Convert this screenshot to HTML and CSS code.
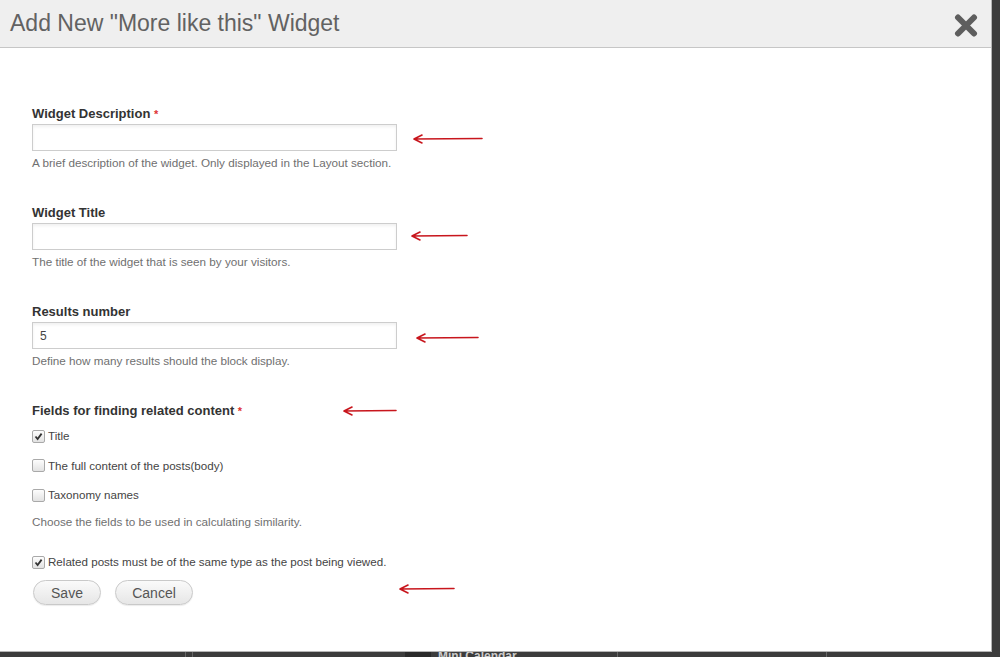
FILE: index.html
```html
<!DOCTYPE html>
<html>
<head>
<meta charset="utf-8">
<link rel="stylesheet" href="styles.css">
</head>
<body>
<div class="modal">
  <div class="modal-header">
    <h1 class="modal-title">Add New "More like this" Widget</h1>
    <button class="close" aria-label="Close">
      <svg width="24" height="23" viewBox="0 0 24 23"><path d="M4 3.5 L20 19.5 M20 3.5 L4 19.5" stroke="#5e5e5e" stroke-width="6" stroke-linecap="round"/></svg>
    </button>
  </div>
  <form class="form">
    <div class="group">
      <label class="label">Widget Description <span class="req">*</span></label>
      <div class="row">
        <input class="text" type="text">
        <svg class="arrow a1" width="72" height="27" viewBox="0 0 72 27"><path d="M2 15 L70 14.5 M2 15 L10 11 M2 15 L10 19" stroke="#c8161d" stroke-width="1.6" fill="none" stroke-linecap="round"/></svg>
      </div>
      <div class="desc">A brief description of the widget. Only displayed in the Layout section.</div>
    </div>
    <div class="group">
      <label class="label">Widget Title</label>
      <div class="row">
        <input class="text" type="text">
        <svg class="arrow a2" width="59" height="27" viewBox="0 0 59 27"><path d="M2 13 L57 12.5 M2 13 L10 9 M2 13 L10 17" stroke="#c8161d" stroke-width="1.6" fill="none" stroke-linecap="round"/></svg>
      </div>
      <div class="desc">The title of the widget that is seen by your visitors.</div>
    </div>
    <div class="group">
      <label class="label">Results number</label>
      <div class="row">
        <input class="text" type="text" value="5">
        <svg class="arrow a3" width="65" height="27" viewBox="0 0 65 27"><path d="M2 16 L63 15.5 M2 16 L10 12 M2 16 L10 20" stroke="#c8161d" stroke-width="1.6" fill="none" stroke-linecap="round"/></svg>
      </div>
      <div class="desc">Define how many results should the block display.</div>
    </div>
    <div class="group last">
      <div class="row">
        <label class="label label-wide">Fields for finding related content <span class="req">*</span></label>
        <svg class="arrow a4" width="56" height="16" viewBox="0 0 56 16"><path d="M2 8 L54 7.5 M2 8 L10 4 M2 8 L10 12" stroke="#c8161d" stroke-width="1.6" fill="none" stroke-linecap="round"/></svg>
      </div>
      <div class="checks">
        <div class="check"><span class="cb on"><svg width="11" height="11" viewBox="0 0 11 11"><path d="M2.5 5.5 L4.6 8 L8.6 2.6" stroke="#333" stroke-width="1.8" fill="none"/></svg></span>Title</div>
        <div class="check"><span class="cb"></span>The full content of the posts(body)</div>
        <div class="check"><span class="cb"></span>Taxonomy names</div>
      </div>
      <div class="desc">Choose the fields to be used in calculating similarity.</div>
    </div>
    <div class="check single"><span class="cb on"><svg width="11" height="11" viewBox="0 0 11 11"><path d="M2.5 5.5 L4.6 8 L8.6 2.6" stroke="#333" stroke-width="1.8" fill="none"/></svg></span>Related posts must be of the same type as the post being viewed.</div>
    <div class="row actions">
      <div class="buttons">
        <button type="button" class="btn save">Save</button>
        <button type="button" class="btn cancel">Cancel</button>
      </div>
      <svg class="arrow a5" width="58" height="25" viewBox="0 0 58 25"><path d="M2 7 L56 6.5 M2 7 L10 3 M2 7 L10 11" stroke="#c8161d" stroke-width="1.6" fill="none" stroke-linecap="round"/></svg>
    </div>
  </form>
</div>
<div class="under">
  <span class="u-col u1"></span>
  <span class="u-col u2"></span>
  <span class="u-icon"></span>
  <span class="u-text">Mini Calendar</span>
  <span class="u-col u3"></span>
  <span class="u-col u4"></span>
</div>
</body>
</html>
```

FILE: styles.css
```css
html, body {
  margin: 0;
  padding: 0;
}
body {
  background: #3c3c3c;
  font-family: "Liberation Sans", Arial, sans-serif;
  width: 1000px;
  height: 657px;
  overflow: hidden;
}
.modal {
  width: 991px;
  height: 651px;
  background: #fff;
  border-right: 1px solid #b5b5b5;
  border-bottom: 1px solid #b5b5b5;
}
.modal-header {
  height: 47px;
  background: #efefef;
  border-bottom: 1px solid #c6c6c6;
  display: flex;
  align-items: center;
  justify-content: space-between;
  padding: 0 13px 0 10px;
}
.modal-title {
  margin: 0;
  font-weight: normal;
  font-size: 23px;
  color: #626262;
  letter-spacing: 0;
}
.close {
  border: 0;
  background: none;
  padding: 0;
  width: 24px;
  height: 23px;
  margin-top: 3px;
}
.close svg { display: block; }
.form {
  padding: 58px 0 0 32px;
}
.group {
  margin-bottom: 35px;
}
.label {
  display: block;
  font-size: 13px;
  line-height: 16px;
  font-weight: bold;
  color: #333;
  margin-bottom: 2px;
}
.req {
  color: #d33;
  font-size: 11px;
  vertical-align: top;
}
.row {
  display: flex;
  align-items: flex-start;
}
.text {
  box-sizing: border-box;
  width: 365px;
  height: 27px;
  margin: 0;
  border: 1px solid #cdcdcd;
  background: #fff;
  box-shadow: inset 0 2px 3px rgba(0,0,0,0.06);
  font-family: "Liberation Sans", Arial, sans-serif;
  font-size: 12px;
  color: #444;
  padding: 0 7px;
}
.desc {
  margin-top: 5px;
  font-size: 11.7px;
  line-height: 14px;
  color: #707070;
}
.arrow { display: block; flex: none; }
.a1 { margin-left: 15px; }
.a2 { margin-left: 13px; }
.a3 { margin-left: 18px; }
.a4 { margin-left: 0; }
.a5 { margin-left: 0; margin-top: 2px; }
.label-wide {
  width: 310px;
  margin-bottom: 0;
}
.checks {
  margin-top: 9px;
  display: flex;
  flex-direction: column;
  gap: 13.5px;
}
.check {
  display: flex;
  align-items: center;
  font-size: 11.6px;
  line-height: 16px;
  color: #444;
}
.cb {
  box-sizing: border-box;
  width: 13px;
  height: 13px;
  border: 1px solid #a9a9a9;
  border-radius: 2px;
  background: linear-gradient(#fdfdfd, #e2e2e2);
  margin-right: 3px;
  display: flex;
  align-items: center;
  justify-content: center;
}
.cb svg { display: block; }
.group.last {
  margin-bottom: 0;
}
.group.last .desc {
  margin-top: 12px;
}
.single {
  margin-top: 25px;
}
.actions {
  margin-top: 10px;
}
.buttons {
  width: 366px;
  display: flex;
  gap: 14px;
}
.btn {
  height: 25px;
  border: 1px solid #c9c9c9;
  border-radius: 13px;
  background: linear-gradient(#fafafa, #e6e6e6);
  font-family: "Liberation Sans", Arial, sans-serif;
  font-size: 14px;
  color: #555;
  padding: 0;
  box-shadow: 0 1px 1px rgba(0,0,0,0.08);
}
.save { width: 68px; margin-left: 1px; }
.cancel { width: 78px; }
.under {
  height: 5px;
  overflow: hidden;
  display: flex;
  align-items: flex-start;
}
.u-col {
  display: block;
  height: 5px;
  width: 1px;
  background: #666;
}
.u1 { margin-left: 185px; }
.u2 { margin-left: 6px; }
.u-icon {
  display: block;
  margin-left: 212px;
  width: 26px;
  height: 5px;
  background: #2a2a2a;
}
.u-text {
  margin-left: 7px;
  font-size: 12px;
  line-height: 12px;
  font-weight: bold;
  color: #ccc;
  margin-top: -2px;
}
.u3 { margin-left: 100px; }
.u4 { margin-left: 208px; }
```
